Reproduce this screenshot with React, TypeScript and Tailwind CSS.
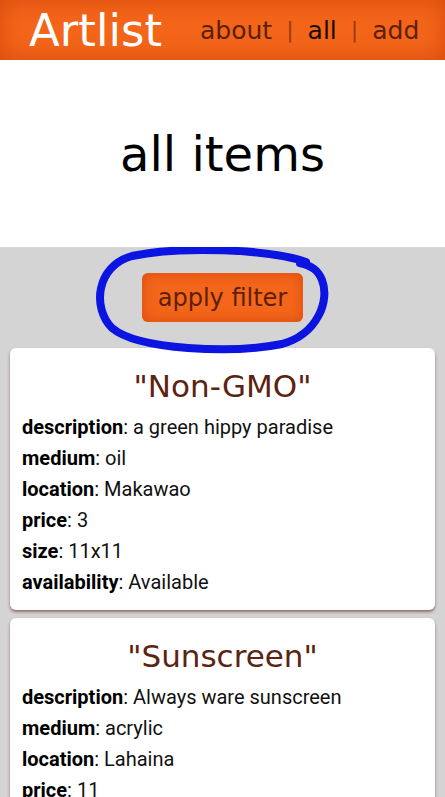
import React from "react"

type Item = {
  title: string
  description: string
  medium: string
  location: string
  price: string
  size: string
  availability: string
}

const items: Item[] = [
  {
    title: "Non-GMO",
    description: "a green hippy paradise",
    medium: "oil",
    location: "Makawao",
    price: "3",
    size: "11x11",
    availability: "Available",
  },
  {
    title: "Sunscreen",
    description: "Always ware sunscreen",
    medium: "acrylic",
    location: "Lahaina",
    price: "11",
    size: "8x10",
    availability: "Available",
  },
]

const heading = { fontFamily: '"DejaVu Sans", "Noto Sans", sans-serif' }
const body = { fontFamily: 'Roboto, "Liberation Sans", sans-serif' }

function Card({ item }: { item: Item }) {
  const rows: [string, string][] = [
    ["description", item.description],
    ["medium", item.medium],
    ["location", item.location],
    ["price", item.price],
    ["size", item.size],
    ["availability", item.availability],
  ]
  return (
    <div className="rounded-md bg-white px-3 pt-3 pb-3 shadow-[0_2px_3px_rgba(90,30,10,0.55)]">
      <h2
        className="mt-2 mb-2 text-center text-[31px] leading-[36px] font-normal text-[#5b2410]"
        style={heading}
      >
        "{item.title}"
      </h2>
      <div className="text-[20px] leading-[31px] text-[#111]" style={body}>
        {rows.map(([k, v]) => (
          <div key={k}>
            <span className="font-bold text-black">{k}</span>: {v}
          </div>
        ))}
      </div>
    </div>
  )
}

export default function App() {
  return (
    <div className="min-h-screen bg-[#d4d4d4]">
      <header
        className="flex h-[60px] items-center bg-[#f4661a] pl-[29px] shadow-[inset_0_0_24px_rgba(190,50,0,0.55)]"
        style={heading}
      >
        <div className="text-[45px] leading-none text-white">Artlist</div>
        <nav className="ml-[38px] flex items-center text-[25px] leading-none text-[#5b1f0a]">
          <span>about</span>
          <span className="mx-[14px] text-[22px] text-[#9a3a14]">|</span>
          <span className="text-[#1a0a05]">all</span>
          <span className="mx-[14px] text-[22px] text-[#9a3a14]">|</span>
          <span>add</span>
        </nav>
      </header>

      <div className="flex h-[187px] items-center justify-center bg-white">
        <h1 className="text-[48px] leading-none text-black" style={heading}>
          all items
        </h1>
      </div>

      <div className="relative">
        <div className="flex justify-center pt-[26px] pb-[26px]">
          <button
            className="h-[49px] rounded-md bg-[#f4661a] px-[16px] text-[24px] text-[#5b1f0a] shadow-[inset_0_0_14px_rgba(190,50,0,0.5)]"
            style={heading}
          >
            apply filter
          </button>
        </div>
        <svg
          className="pointer-events-none absolute left-0 top-0"
          width="445"
          height="115"
          viewBox="0 247 445 115"
        >
          <path
            d="M 306 262 C 270 249, 180 246, 132 256 C 96 266, 92 308, 112 328 C 138 350, 232 354, 282 344 C 318 334, 330 300, 322 280 C 318 270, 312 266, 300 263"
            fill="none"
            stroke="#0b14e0"
            strokeWidth="8"
            strokeLinecap="round"
          />
        </svg>

        <div className="flex flex-col gap-2 px-[10px] pb-4">
          {items.map((it) => (
            <Card key={it.title} item={it} />
          ))}
        </div>
      </div>
    </div>
  )
}
